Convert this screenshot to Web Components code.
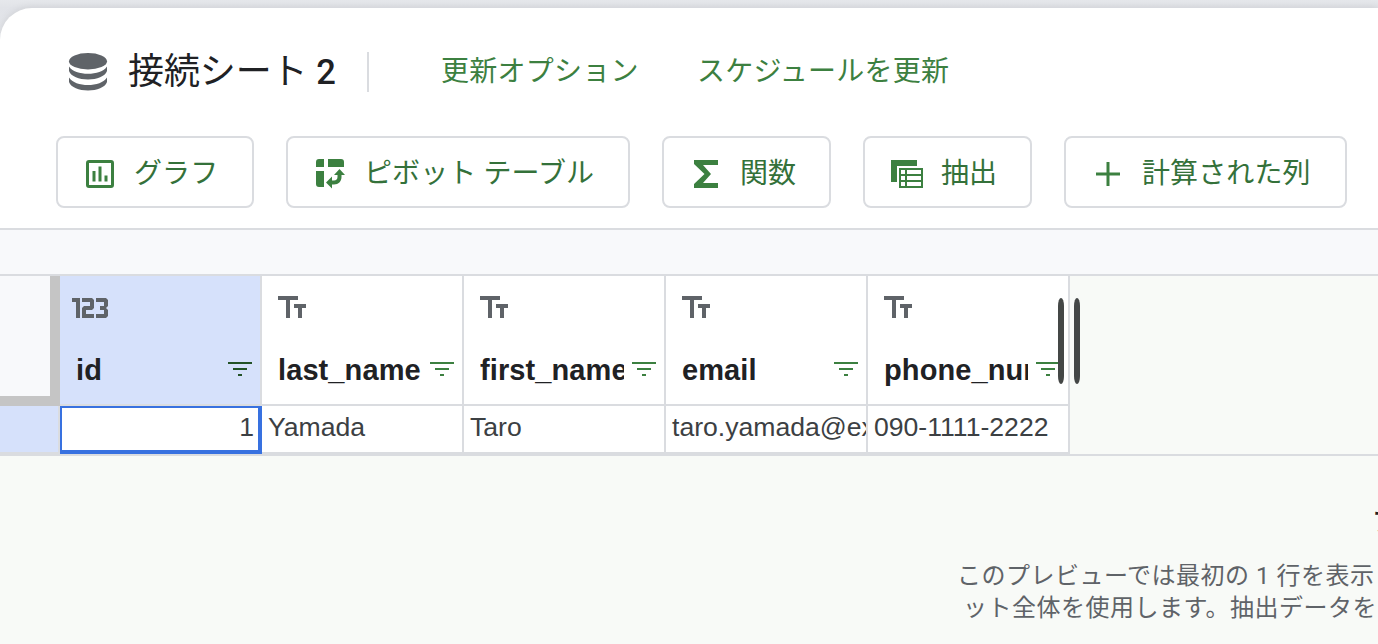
<!DOCTYPE html>
<html lang="ja">
<head>
<meta charset="utf-8">
<title>接続シート 2</title>
<style>
html,body{margin:0;height:100%;overflow:hidden}
body{font-family:"Liberation Sans","Noto Sans CJK JP",sans-serif;background:#e3e5ea}
</style>
</head>
<body>
<sheet-app></sheet-app>
<script>
const define = (name, html, setup) => {
  const template = document.createElement('template');
  template.innerHTML = html;
  customElements.define(name, class extends HTMLElement {
    constructor() {
      super();
      this.attachShadow({ mode: 'open' }).append(template.content.cloneNode(true));
    }
    connectedCallback() { if (setup) setup(this, this.shadowRoot); }
  });
};

const ICONS = {
  db: [40, 40, '<g fill="#5f6368"><ellipse cx="20" cy="9.200" rx="19" ry="8.200"/><path d="M1 14.500C4 19.500 12 21.800 20 21.800S36 19.500 39 14.500V19C37 24.500 29 27.500 20 27.500S3 24.500 1 19Z"/><path d="M1 25.500C4 30.500 12 33 20 33S36 30.500 39 25.500V30C37 35.500 29 38.500 20 38.500S3 35.500 1 30Z"/></g>'],
  chart: [28, 28, '<path fill="#3c8040" fill-rule="evenodd" d="M3 0H25A3 3 0 0 1 28 3V25A3 3 0 0 1 25 28H3A3 3 0 0 1 0 25V3A3 3 0 0 1 3 0ZM3 3V25H25V3ZM6.500 11H9.500V21.500H6.500ZM12.500 6.500H15.500V21.500H12.500ZM18.500 15.500H21.500V21.500H18.500Z"/>'],
  pivot: [30, 30, '<path fill="#3c8040" d="M3 0H8V8H0V3A3 3 0 0 1 3 0ZM12 0H25A3 3 0 0 1 28 3V8H12ZM0 12H8V28H3A3 3 0 0 1 0 25ZM23.500 10L29 16H25.500V18C25.500 22.500 22.500 25.500 18 25.500H16V29.500L10 23.500L16 17.500V21.500H18C20.300 21.500 21.500 20.300 21.500 18V16H18Z"/>'],
  sigma: [24, 28, '<path fill="#3c8040" d="M0 0H24V5H9L17 14L9 23H24V28H0V24L10.500 14L0 4Z"/>'],
  extract: [32, 28, '<path fill="#3c8040" fill-rule="evenodd" d="M0 0H26V6H6V22H0ZM8 8H32V28H8ZM10 10V14H14V10ZM16 10V14H30V10ZM10 16V20H14V16ZM16 16V20H30V16ZM10 22V26H14V22ZM16 22V26H30V22Z"/>'],
  plus: [24, 24, '<path fill="#3c8040" d="M10.500 0H13.500V10.500H24V13.500H13.500V24H10.500V13.500H0V10.500H10.500Z"/>'],
  number: [36, 20, '<path fill="#5f6368" d="M0 0H8V20H4V4H0ZM10 0H20L22 2V10L20 12H14V16H22V20H10V10L12 8H18V4H10ZM24 0H34L36 2V8L34 10L36 12V18L34 20H24V16H32V12H28V8H32V4H24Z"/>'],
  text: [28, 22, '<path fill="#5f6368" d="M0 0H20V4H12V22H8V4H0ZM16 8H28V12H24V22H20V12H16Z"/>'],
  filter: [24, 14, '<path fill="currentColor" d="M0 0H24V2H0ZM5 6H19V8H5ZM10 12H14V14H10Z"/>']
};

define('sheet-icon', '<style>:host{display:block;flex:none}svg{display:block}</style><span></span>', (el, root) => {
  const [w, h, body] = ICONS[el.getAttribute('name')];
  root.querySelector('span').innerHTML = `<svg width="${w}" height="${h}" viewBox="0 0 ${w} ${h}">${body}</svg>`;
});

define('sheet-link', `<style>
:host{display:block;font:400 28px/40px Roboto,"Noto Sans CJK JP",sans-serif;letter-spacing:.25px;color:#3c8040;white-space:nowrap}
</style><slot></slot>`);

define('tool-button', `<style>
:host{display:flex;align-items:center;box-sizing:border-box;height:72px;border:2px solid #dadce0;border-radius:8px;
font:400 28px/40px Roboto,"Noto Sans CJK JP",sans-serif;letter-spacing:.1px;color:#34713a;white-space:nowrap;padding-top:4px}
.label{display:block;padding-bottom:1px}
</style><slot name="icon"></slot><span class="label"><slot></slot></span>`);

define('sheet-header', `<style>
:host{display:block;box-sizing:border-box;height:222px;background:#fff;border-radius:32px 0 0 0;border-bottom:2px solid #dadce0;box-shadow:0 0 8px #0000001a;padding-top:34px}
.top{display:flex;align-items:center;height:60px;padding-left:68px}
h1{margin:0 0 0 20px;width:238px;font:400 36px/50px Roboto,"Noto Sans CJK JP",sans-serif;letter-spacing:-.1px;color:#202124;white-space:nowrap}
h1 b{font-weight:500;font-size:34.500px}
.rule{width:2px;height:40px;background:#dadce0;margin-left:1px}
.a{margin-left:72px;width:256px}
.tools{display:flex;gap:32px;padding:34px 0 0 56px}
.tools>*{flex:none}
.b1{width:198px;padding-left:28px}.b2{width:344px;padding-left:28px}.b3{width:169px;padding-left:30px}.b4{width:169px;padding-left:26px}.b5{width:283px;padding-left:30px}
.b1 sheet-icon{margin-right:20px}.b2 sheet-icon{margin-right:18px}.b3 sheet-icon{margin-right:22px}.b4 sheet-icon{margin-right:18px}.b5 sheet-icon{margin-right:22px}
</style>
<div class="top"><sheet-icon name="db"></sheet-icon><h1>接続シート <b>2</b></h1><div class="rule"></div>
<sheet-link class="a">更新オプション</sheet-link><sheet-link>スケジュールを更新</sheet-link></div>
<div class="tools">
<tool-button class="b1"><sheet-icon slot="icon" name="chart"></sheet-icon>グラフ</tool-button>
<tool-button class="b2"><sheet-icon slot="icon" name="pivot"></sheet-icon>ピボット テーブル</tool-button>
<tool-button class="b3"><sheet-icon slot="icon" name="sigma"></sheet-icon>関数</tool-button>
<tool-button class="b4"><sheet-icon slot="icon" name="extract"></sheet-icon>抽出</tool-button>
<tool-button class="b5"><sheet-icon slot="icon" name="plus"></sheet-icon>計算された列</tool-button>
</div>`);

define('column-head', `<style>
:host{display:block;box-sizing:border-box;width:202px;height:130px;border:solid #dadce0;border-width:0 2px 2px 0;background:#fff;padding:20px 8px 0 16px;color:#3c8040}
:host([selected]){background:#d6e1fb;color:#235227}
:host([selected]) .type{margin-left:-4px;padding-top:2px;height:20px}
.type{height:22px;display:flex;align-items:center}
.line{display:flex;justify-content:space-between;align-items:center;margin-top:34px;height:36px}
.name{width:144px;overflow:hidden;white-space:nowrap;font:700 29px/36px "Liberation Sans",Arial,sans-serif;letter-spacing:.1px;color:#202124}
.line sheet-icon{margin-top:-2px}
</style><div class="type"></div><div class="line"><span class="name"><slot></slot></span><sheet-icon name="filter"></sheet-icon></div>`,
(el, root) => { root.querySelector('.type').innerHTML = `<sheet-icon name="${el.getAttribute('type')}"></sheet-icon>`; });

define('data-cell', `<style>
:host{display:block;box-sizing:border-box;width:202px;height:48px;border:solid #dadce0;border-width:0 2px 2px 0;background:#fff;padding:0 0 0 6px;overflow:hidden;white-space:nowrap;font:400 26.600px/42px "Liberation Sans",Arial,sans-serif;color:#3c4043}
:host([selected]){border:solid #3871e0;border-width:2px 4px 4px 2px;text-align:right;padding:0 4px 0 0;line-height:38px}
</style><slot></slot>`);

define('sheet-grid', `<style>
:host{display:block;position:relative;border-top:2px solid #dadce0;border-bottom:2px solid #dadce0;height:178px;background:#f8faf7}
.grid{display:grid;grid-template-columns:60px repeat(5,202px);grid-template-rows:130px 48px}
.corner{box-sizing:border-box;background:#f8f9fb;border:solid #c5c5c5;border-width:0 10px 10px 0}
.row{box-sizing:border-box;background:#d6e1fb;border:solid #dadce0;border-width:0 2px 2px 0}
.handle{position:absolute;top:22px;width:6px;height:86px;border-radius:3px/8px;background:#444746}
</style>
<div class="grid"><div class="corner"></div>
<column-head selected type="number">id</column-head><column-head type="text">last_name</column-head><column-head type="text">first_name</column-head><column-head type="text">email</column-head><column-head type="text">phone_number</column-head>
<div class="row"></div><data-cell selected>1</data-cell><data-cell>Yamada</data-cell><data-cell>Taro</data-cell><data-cell>taro.yamada@ex</data-cell><data-cell>090-1111-2222</data-cell></div>
<div class="handle" style="left:1058px"></div><div class="handle" style="left:1074px"></div>`);

define('preview-note', `<style>
:host{display:block;height:188px;background:#f8faf7;overflow:hidden;font-family:Roboto,"Noto Sans CJK JP",sans-serif;white-space:nowrap}
h2{margin:0;padding:47px 0 0 1372px;font-size:28px;font-weight:500;line-height:40px;color:#202124}
p{margin:17px 0 0 957px;font-size:24px;line-height:32px;letter-spacing:.5px;color:#5f6368}
p span{display:block}
.second{padding-left:6px}
</style><h2>プ</h2><p><span>このプレビューでは最初の 1 行を表示</span><span class="second">ット全体を使用します。抽出データを</span></p>`);

define('sheet-app', `<style>
:host{display:block;height:644px;overflow:hidden;background:linear-gradient(#e6e8ec,#e1e3e8 8px,#e6e8ec 40px);padding-top:8px;box-sizing:border-box}
.formula{height:44px;background:#f8f9fb}
</style><sheet-header></sheet-header><div class="formula"></div><sheet-grid></sheet-grid><preview-note></preview-note>`);
</script>
</body>
</html>
